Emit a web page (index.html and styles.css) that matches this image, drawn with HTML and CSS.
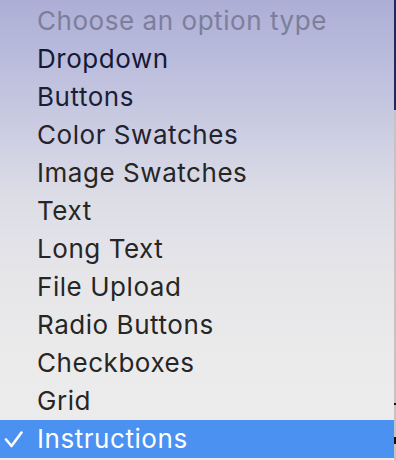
FILE: index.html
```html
<!DOCTYPE html>
<html lang="en">
<head>
    <meta charset="UTF-8">
    <meta name="viewport" content="width=device-width, initial-scale=1.0">
    <title>Option Type</title>
    <link rel="stylesheet" href="styles.css">
</head>
<body>
    <div class="screen">
        <ul class="menu">
            <li class="menu-item header">Choose an option type</li>
            <li class="menu-item tone-1">Dropdown</li>
            <li class="menu-item tone-2">Buttons</li>
            <li class="menu-item tone-3">Color Swatches</li>
            <li class="menu-item">Image Swatches</li>
            <li class="menu-item">Text</li>
            <li class="menu-item">Long Text</li>
            <li class="menu-item">File Upload</li>
            <li class="menu-item">Radio Buttons</li>
            <li class="menu-item">Checkboxes</li>
            <li class="menu-item">Grid</li>
            <li class="menu-item selected">
                <svg class="check" width="20" height="18" viewBox="0 0 20 18">
                    <polyline points="2,8.5 7.5,15 17.5,1.5" fill="none" stroke="#fff" stroke-width="2.6" stroke-linecap="round" stroke-linejoin="round"/>
                </svg>
                Instructions
            </li>
        </ul>
        <div class="edge">
            <div class="edge-dark"></div>
            <div class="edge-gap long"></div>
            <div class="edge-mark"></div>
            <div class="edge-gap short"></div>
            <div class="edge-knob"></div>
        </div>
    </div>
</body>
</html>
```

FILE: styles.css
```css
body {
    margin: 0;
    font-family: Inter, "Noto Sans", sans-serif;
}
.screen {
    display: flex;
    width: 396px;
    height: 460px;
    overflow: hidden;
}
.menu {
    list-style: none;
    margin: 0;
    padding: 2px 0 0 0;
    width: 394px;
    background: linear-gradient(180deg, #acaed6 0%, #c4c6e0 22%, #dcdce6 42%, #e6e6e9 60%, #ebebeb 80%, #ececec 100%);
}
.menu-item {
    position: relative;
    height: 38px;
    line-height: 38px;
    padding-left: 37px;
    font-size: 26px;
    letter-spacing: 0.55px;
    color: #262626;
    white-space: nowrap;
}
.header {
    color: #7c7e9c;
}
.tone-1 {
    color: #151936;
}
.tone-2 {
    color: #1c1e36;
}
.tone-3 {
    color: #22232f;
}
.selected {
    background: #4a91f1;
    color: #fff;
}
.check {
    position: absolute;
    left: 4px;
    top: 11px;
}
.edge {
    display: flex;
    flex-direction: column;
    width: 2px;
    background: #c4c4c4;
}
.edge-dark {
    height: 110px;
    background: #25265e;
}
.edge-gap.long {
    height: 293px;
}
.edge-gap.short {
    height: 32px;
}
.edge-mark {
    height: 2px;
    background: #111;
}
.edge-knob {
    height: 7px;
    background: #111;
}
```
